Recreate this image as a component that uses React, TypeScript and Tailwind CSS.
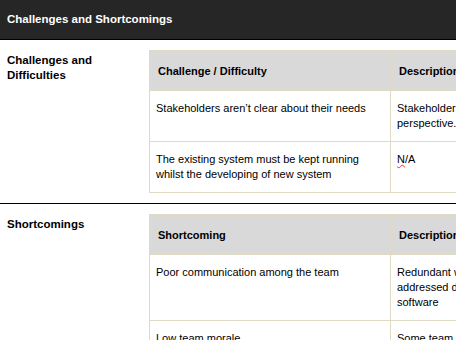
import React from "react";

const th = "border border-[#e0dac4] bg-[#d9d9d9] text-left align-top font-bold text-[11px] leading-[15px] pl-[8px] pr-[6px] pt-[13px] pb-[11px]";
const td = "border border-[#e0dac4] align-top text-[11px] leading-[15px] pl-[6px] pr-[5px] pt-[10px] pb-[10px] whitespace-nowrap";

function Section({ label, rows, col1 }: { label: React.ReactNode; rows: [React.ReactNode, React.ReactNode][]; col1: string }) {
  return (
    <section className="flex pt-[10px] pb-[10px] border-b border-black">
      <div className="w-[149px] shrink-0 pl-[7px] pt-[3px] font-bold text-[11.5px] leading-[15px]">{label}</div>
      <table className="shrink-0 border-collapse table-fixed w-[700px]">
        <colgroup>
          <col className="w-[241px]" />
          <col className="w-[300px]" />
          <col />
        </colgroup>
        <thead>
          <tr>
            <th className={th}>{col1}</th>
            <th className={th}>Description</th>
            <th className={th}>Resolution</th>
          </tr>
        </thead>
        <tbody>
          {rows.map((r, i) => (
            <tr key={i}>
              <td className={td}>{r[0]}</td>
              <td className={td}>{r[1]}</td>
              <td className={td}></td>
            </tr>
          ))}
        </tbody>
      </table>
    </section>
  );
}

export default function App() {
  return (
    <div className="w-[456px] h-[340px] overflow-hidden bg-white text-black font-['Liberation_Sans',Arial,sans-serif]">
      <div className="h-[40px] bg-[#262626] border-b border-black flex items-center px-[7px] pt-[1px] text-white font-bold text-[11.5px]">
        Challenges and Shortcomings
      </div>
      <Section
        label={<>Challenges and<br />Difficulties</>}
        col1="Challenge / Difficulty"
        rows={[
          [
            <>Stakeholders aren’t clear about their needs</>,
            <>Stakeholders each see the system from their own<br />perspective.</>,
          ],
          [
            <>The existing system must be kept running<br />whilst the developing of new system</>,
            <><span className="underline decoration-wavy decoration-red-500 decoration-[1px]">N</span>/A</>,
          ],
        ]}
      />
      <Section
        label={<>Shortcomings</>}
        col1="Shortcoming"
        rows={[
          [
            <>Poor communication among the team</>,
            <>Redundant work and issues that were not<br />addressed during development of the<br />software</>,
          ],
          [
            <>Low team morale</>,
            <>Some team members felt left out</>,
          ],
        ]}
      />
    </div>
  );
}
